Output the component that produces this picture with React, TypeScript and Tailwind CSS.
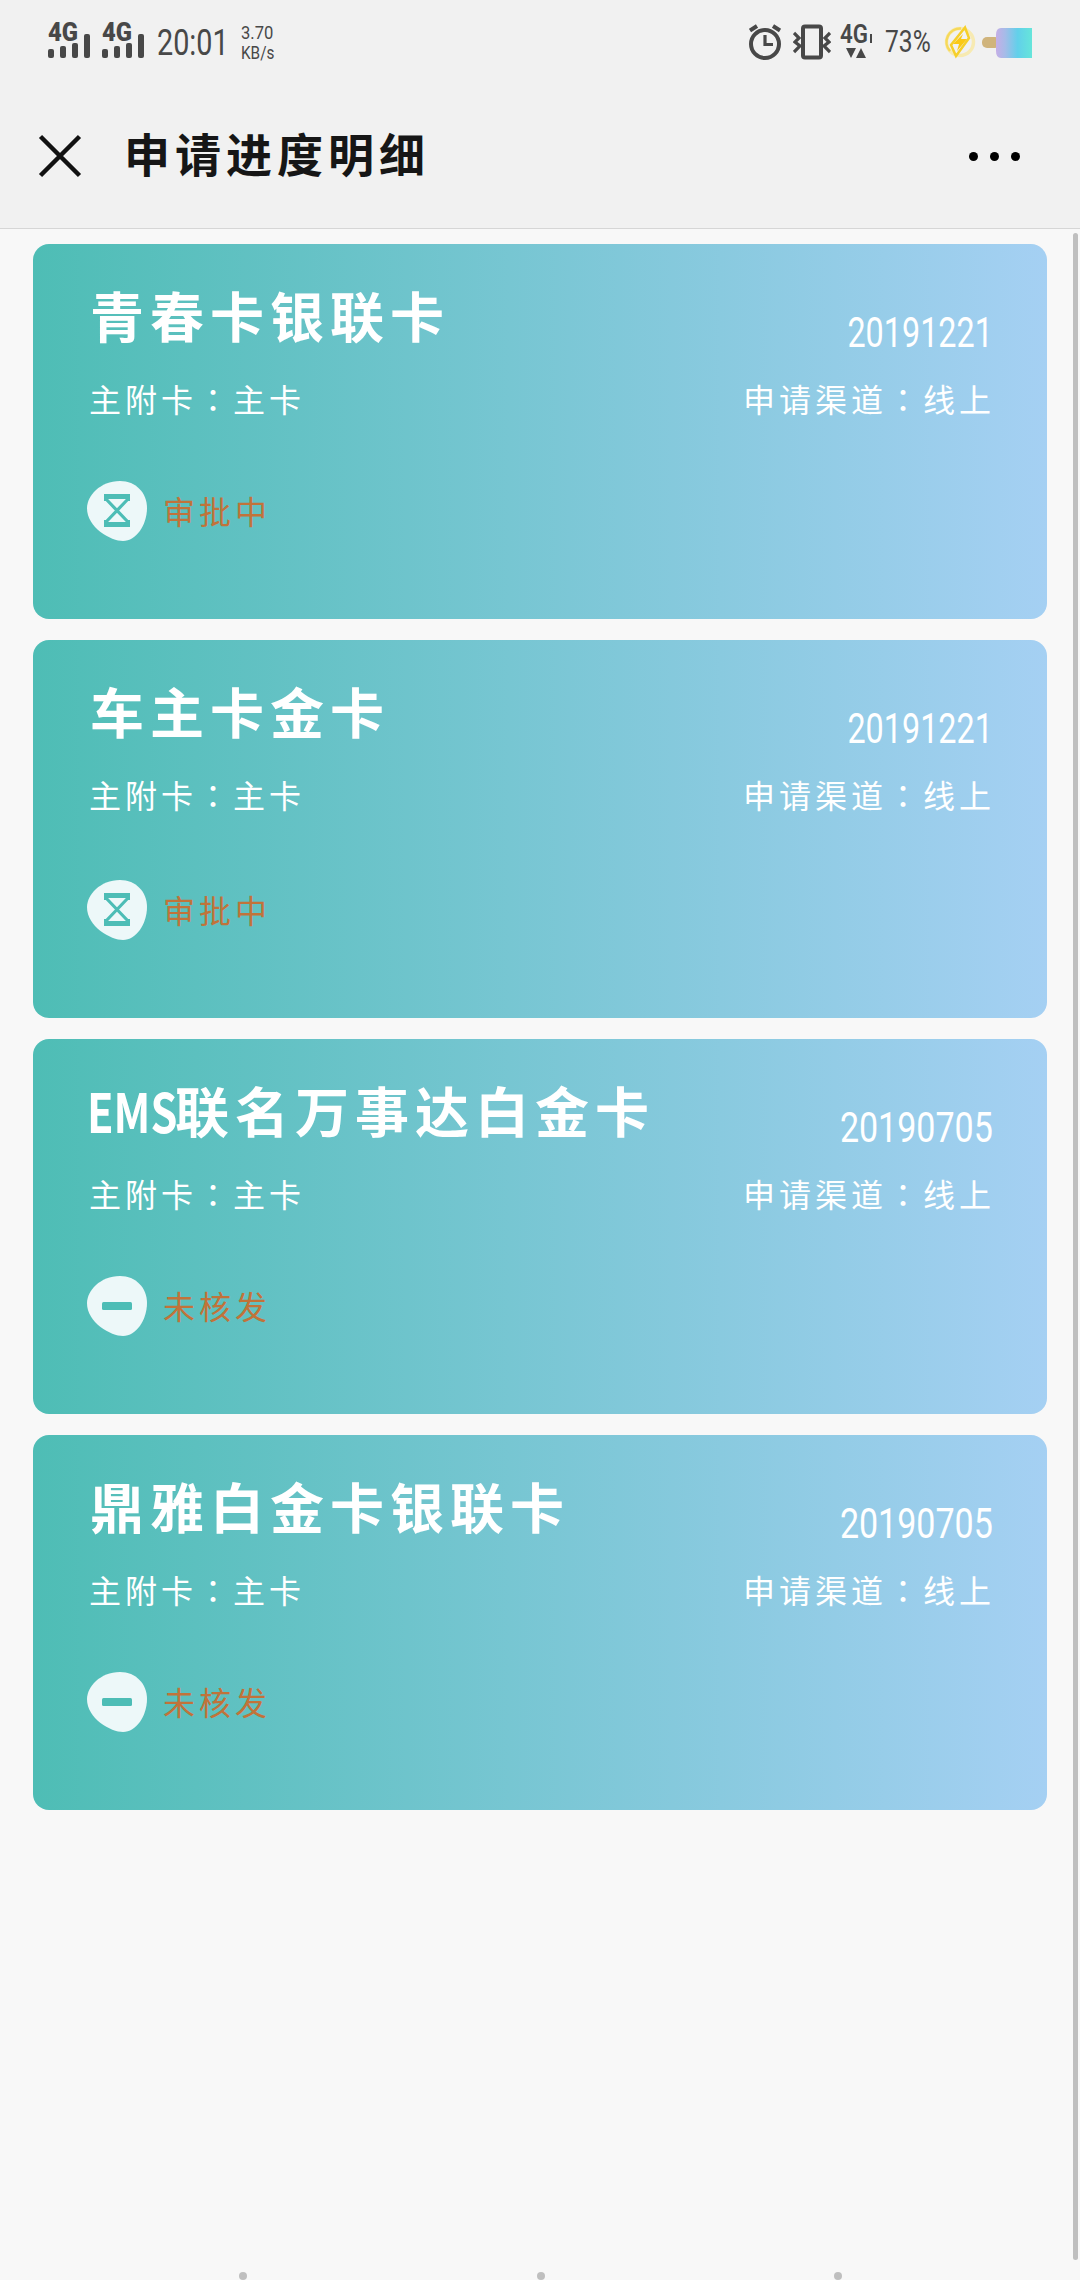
import { FC } from "react";
import clsx from "clsx";

type Status = "pending" | "declined";

type Application = {
  id: number;
  latin?: string;
  name: string;
  date: string;
  dateClass: string;
  status: Status;
  label: string;
};

const applications: Application[] = [
  {
    id: 1,
    name: "青春卡银联卡",
    date: "20191221",
    dateClass: "scale-x-[0.77]",
    status: "pending",
    label: "审批中",
  },
  {
    id: 2,
    name: "车主卡金卡",
    date: "20191221",
    dateClass: "scale-x-[0.77]",
    status: "pending",
    label: "审批中",
  },
  {
    id: 3,
    latin: "EMS",
    name: "联名万事达白金卡",
    date: "20190705",
    dateClass: "scale-x-[0.81]",
    status: "declined",
    label: "未核发",
  },
  {
    id: 4,
    name: "鼎雅白金卡银联卡",
    date: "20190705",
    dateClass: "scale-x-[0.81]",
    status: "declined",
    label: "未核发",
  },
];

const SignalIcon: FC = () => (
  <svg width="44" height="50" viewBox="0 -12 44 50" fill="#484848">
    <text
      x="0"
      y="19"
      fontSize="25"
      fontWeight="900"
      fontFamily="Roboto, sans-serif"
      textLength="30"
      lengthAdjust="spacingAndGlyphs"
    >
      4G
    </text>
    <rect x="0" y="27" width="6" height="9" rx="2" />
    <rect x="12" y="24" width="6" height="12" rx="2" />
    <rect x="24" y="21" width="6" height="15" rx="2" />
    <rect x="36" y="12" width="6" height="24" rx="2" />
  </svg>
);

const AlarmIcon: FC = () => (
  <svg width="34" height="36" viewBox="0 0 34 36" fill="none" stroke="#484848">
    <circle cx="16" cy="20" r="14" strokeWidth="4" />
    <path d="M16 11v9.500h8" strokeWidth="3.200" />
    <path d="M1 6.500 8 2M31 6.500 24 2" strokeWidth="4" />
  </svg>
);

const VibrateIcon: FC = () => (
  <svg width="38" height="36" viewBox="0 0 38 36" fill="none" stroke="#484848">
    <rect x="10" y="2.500" width="18" height="31" rx="2" strokeWidth="4" />
    <path
      d="M1 9l5 5-4 4 5 4-6 6M37 9l-5 5 4 4-5 4 6 6"
      strokeWidth="3.200"
    />
  </svg>
);

const DataIcon: FC = () => (
  <svg width="34" height="46" viewBox="0 -10 34 46" fill="#484848">
    <text
      x="0"
      y="19"
      fontSize="25"
      fontWeight="600"
      fontFamily="Roboto, sans-serif"
      textLength="28"
      lengthAdjust="spacingAndGlyphs"
    >
      4G
    </text>
    <path d="M30 10h2v9h-2zM6 24h10l-5 10zM16 34h10l-5-10z" />
  </svg>
);

const BoltIcon: FC = () => (
  <svg width="32" height="34" viewBox="0 0 32 34" fill="none">
    <circle cx="16" cy="17" r="13.500" stroke="#f7eab2" strokeWidth="3.500" />
    <path d="M6 26A13.500 13.500 0 0 1 17 3.500" stroke="#f6d95a" strokeWidth="2.500" />
    <path d="M21 2.500 7 20l5 11 13-18z" stroke="#f6cf2a" strokeWidth="2.500" />
    <path d="M19 9 9 19h6l-2 7 10-12h-6z" fill="#fbc916" />
  </svg>
);

const BatteryIcon: FC = () => (
  <svg width="50" height="30" viewBox="0 0 50 30">
    <defs>
      <linearGradient id="popsicle">
        <stop offset="0" stopColor="#c5aee6" />
        <stop offset="0.250" stopColor="#a6bbe8" />
        <stop offset="0.600" stopColor="#62d0ea" />
        <stop offset="1" stopColor="#66e5da" />
      </linearGradient>
    </defs>
    <rect x="0" y="9" width="18" height="11" rx="5" fill="#d0b47c" />
    <path d="M19 0h31v30H19q-5 0-5-7V7q0-7 5-7z" fill="url(#popsicle)" />
  </svg>
);

const StatusIcon: FC<{ status: Status }> = ({ status }) => (
  <svg width="60" height="60" viewBox="0 0 60 60">
    <path
      d="M33 0C49 0 60 12 60 27C60 44 49 60 36 60C24 60 0 47 0 27C0 15 13 0 33 0Z"
      fill="#edf8f9"
    />
    {status === "pending" ? (
      <g fill="none" stroke="#4dbdb6">
        <path d="M19 18 41 41M41 18 19 41" strokeWidth="3.200" />
        <path d="M17 15.500h26M17 43.500h26" strokeWidth="5" />
        <path d="M18.500 15v5M41.500 15v5M18.500 39v5M41.500 39v5" strokeWidth="3" />
      </g>
    ) : (
      <rect x="15" y="26" width="30" height="8" rx="1.500" fill="#4dbdb6" />
    )}
  </svg>
);

// The TC face centres the full-width colon in its cell
const Colon: FC = () => (
  <span lang="zh-TW" className="font-['Noto_Sans_CJK_TC',sans-serif]">
    ：
  </span>
);

const StatusBar: FC = () => (
  <div className="flex h-[84px] items-start justify-between pt-2.5 pr-12 pl-12 font-[Roboto,sans-serif] text-[#484848]">
    <div className="flex items-start">
      <div className="flex gap-2.5">
        <SignalIcon />
        <SignalIcon />
      </div>
      <span className="mt-3.5 ml-[11px] w-[73px] origin-left scale-x-[0.8] text-[36px] leading-[38px] whitespace-nowrap">
        20:01
      </span>
      <div className="mt-[13px] ml-[11px] flex flex-col text-[18px] leading-5">
        <span className="origin-left scale-x-[0.92]">3.70</span>
        <span className="origin-left scale-x-[0.85]">KB/s</span>
      </div>
    </div>

    <div className="flex items-start">
      <div className="mt-3.5 mr-[10px]">
        <AlarmIcon />
      </div>
      <div className="mt-3.5 mr-[9px]">
        <VibrateIcon />
      </div>
      <div className="mt-1">
        <DataIcon />
      </div>
      <span className="mt-3 ml-[11px] w-[48px] origin-left scale-x-[0.77] text-[32px] leading-[38px] whitespace-nowrap">
        73%
      </span>
      <div className="mt-[15px] ml-[11px]">
        <BoltIcon />
      </div>
      <div className="mt-[18px] ml-[6px]">
        <BatteryIcon />
      </div>
    </div>
  </div>
);

const TitleBar: FC = () => (
  <div className="flex h-[144px] items-center justify-between pr-[60px] pb-1 pl-[38px]">
    <div className="flex items-center">
      <svg
        className="mt-1"
        width="44"
        height="44"
        viewBox="0 0 44 44"
        fill="none"
        stroke="#111"
        strokeWidth="4.500"
      >
        <path d="M2.500 2.500l39 39M41.500 2.500l-39 39" />
      </svg>
      <h1 className="-mt-1 ml-[42px] text-[46px] leading-[60px] font-bold tracking-[5px] text-[#161616]">
        申请进度明细
      </h1>
    </div>
    <div className="mt-1 flex gap-3">
      <span className="size-[9px] rounded-full bg-black" />
      <span className="size-[9px] rounded-full bg-black" />
      <span className="size-[9px] rounded-full bg-black" />
    </div>
  </div>
);

const ApplicationCard: FC<{ item: Application; tall?: boolean }> = ({ item, tall }) => (
  <section
    className={clsx(
      "rounded-2xl bg-linear-to-r/srgb from-[#4ebdb5] to-[#a5d0f3] px-[54px] pt-[41px] text-white",
      tall ? "h-[378px]" : "h-[375px]"
    )}
  >
    <div className="flex h-[95px] items-start justify-between">
      <h2 className="flex text-[54px] leading-[60px] font-bold whitespace-nowrap">
        {item.latin && (
          <span className="w-[85px] origin-left scale-x-[0.8]">{item.latin}</span>
        )}
        <span className="pl-[3px] tracking-[6px]">{item.name}</span>
      </h2>
      <span
        className={clsx(
          "mt-[28px] origin-right font-[Roboto,sans-serif] text-[42px] leading-10",
          item.dateClass
        )}
      >
        {item.date}
      </span>
    </div>

    <div className="flex h-9 items-center justify-between text-[32px] leading-9 tracking-[4px]">
      <p className="pl-0.5">
        主附卡
        <Colon />
        主卡
      </p>
      <p className="-mr-0.5">
        申请渠道
        <Colon />
        线上
      </p>
    </div>

    <div className={clsx("flex h-[60px] items-center", tall ? "mt-[68px]" : "mt-[65px]")}>
      <StatusIcon status={item.status} />
      <span className="-mt-0.5 ml-4 text-[32px] leading-9 tracking-[4px] text-[#c1733a]">
        {item.label}
      </span>
    </div>
  </section>
);

const App: FC = () => {
  return (
    <div className="relative flex h-[2280px] w-[1080px] flex-col overflow-hidden bg-[#f8f8f8] font-['Noto_Sans_CJK_SC',sans-serif]">
      <header className="h-[229px] border-b border-[#d6d6d6] bg-[#f1f1f1]">
        <StatusBar />
        <TitleBar />
      </header>

      <main className="flex flex-1 flex-col gap-[21px] px-[33px] pt-[15px]">
        {applications.map((item) => (
          <ApplicationCard key={item.id} item={item} tall={item.id === 2} />
        ))}
      </main>

      {/* Navigation hints */}
      <footer className="flex h-2 justify-between pr-[238px] pl-[239px]">
        <span className="size-2 rounded-full bg-[#bfbfbf]" />
        <span className="size-2 rounded-full bg-[#bfbfbf]" />
        <span className="size-2 rounded-full bg-[#bfbfbf]" />
      </footer>

      {/* Scrollbar */}
      <div className="absolute top-[233px] right-0.5 h-[2027px] w-[5px] rounded-full bg-[#bfbfbf]" />
    </div>
  );
};

export default App;
